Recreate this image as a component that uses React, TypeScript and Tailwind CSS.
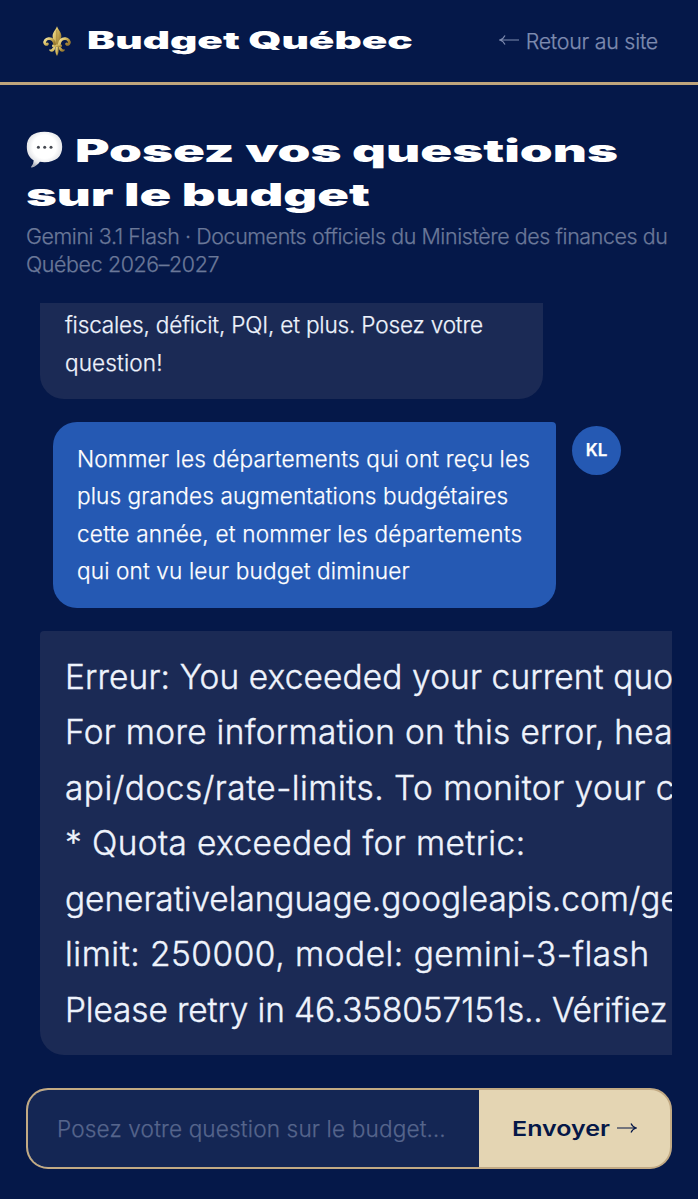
import { useState } from 'react'
import clsx from 'clsx'

interface Line {
  text: string
  className?: string
}

const WELCOME: Line[] = [
  { text: 'fiscales, déficit, PQI, et plus. Posez votre', className: 'tracking-[-0.19px]' },
  { text: 'question!', className: 'tracking-[0.1px]' },
]

const QUESTION: Line[] = [
  { text: 'Nommer les départements qui ont reçu les', className: 'tracking-[0.15px]' },
  { text: 'plus grandes augmentations budgétaires', className: 'tracking-[0.08px]' },
  { text: 'cette année, et nommer les départements', className: 'tracking-[0.2px]' },
  { text: 'qui ont vu leur budget diminuer', className: 'tracking-[0.13px]' },
]

const ERROR: Line[] = [
  { text: 'Erreur: You exceeded your current quo', className: 'tracking-[0.15px]' },
  { text: 'For more information on this error, hea', className: 'tracking-[0.33px]' },
  { text: 'api/docs/rate-limits. To monitor your c', className: 'tracking-[0.5px]' },
  { text: '* Quota exceeded for metric:', className: 'tracking-[0.4px]' },
  { text: 'generativelanguage.googleapis.com/ge', className: 'tracking-[-0.02px]' },
  { text: 'limit: 250000, model: gemini-3-flash', className: 'tracking-[0.53px]' },
  { text: 'Please retry in 46.358057151s.. Vérifiez', className: 'tracking-[-0.11px]' },
]

function Lines({ lines }: { lines: Line[] }) {
  return (
    <>
      {lines.map(l => (
        <div key={l.text} className={clsx('whitespace-nowrap', l.className)}>
          {l.text}
        </div>
      ))}
    </>
  )
}

function FleurDeLis() {
  return (
    <svg viewBox="0 0 30 32" className="h-8 w-[30px] shrink-0">
      <defs>
        <linearGradient id="gold" x1="0" y1="0" x2="1" y2="0.6">
          <stop offset="0" stopColor="#f3e6a4" />
          <stop offset="0.45" stopColor="#d9bf66" />
          <stop offset="1" stopColor="#9a7b30" />
        </linearGradient>
      </defs>
      <g fill="url(#gold)">
        <path d="M15 1.300c-1.200 3.500-4.400 6-4.400 9.900 0 3.100 2 5.300 2.800 9.100h3.200c.8-3.800 2.800-6 2.800-9.100 0-3.900-3.200-6.400-4.400-9.900z" />
        <path d="M9.800 26.700c-1.700 0-2.800-1.100-2.500-2.500 1.200.7 2.300.1 3-1 .5-.8 1.200-1.200 2.300-1.200.8 0 1 .3.900.8-.5 2.400-1.900 3.900-3.700 3.900zM20.200 26.700c1.700 0 2.800-1.100 2.500-2.500-1.200.7-2.300.1-3-1-.5-.8-1.200-1.200-2.300-1.200-.8 0-1 .3-.9.8.5 2.400 1.900 3.900 3.700 3.900z" />
        <path d="M13.600 22h2.800c.6 3.200.3 6.300-1.400 9-1.700-2.700-2-5.800-1.400-9z" />
        <rect x="10" y="19.600" width="10" height="2.500" rx="1.200" />
      </g>
      <g fill="none" stroke="url(#gold)" strokeWidth="2.800" strokeLinecap="round">
        <path d="M12.700 19.200c-.7-3.700-3-5.900-6.100-5.600-2.800.3-4.500 2.600-3.700 4.600.5 1.200 1.700 1.500 2.500.7" />
        <path d="M17.300 19.200c.7-3.700 3-5.900 6.100-5.600 2.800.3 4.500 2.600 3.700 4.600-.5 1.200-1.700 1.500-2.500.7" />
      </g>
      <path d="M14.800 5v14.500" stroke="#8e7230" strokeWidth="0.6" />
    </svg>
  )
}

function SpeechBubble() {
  return (
    <svg viewBox="0 0 37 37" className="-mt-1 h-[37px] w-[37px] shrink-0">
      <defs>
        <radialGradient id="bubble" cx="0.5" cy="0.42" r="0.6">
          <stop offset="0.55" stopColor="#ffffff" />
          <stop offset="0.82" stopColor="#e4e5e8" />
          <stop offset="1" stopColor="#a9adb8" />
        </radialGradient>
      </defs>
      <path
        d="M18.500.8C29.800.8 36.200 6 36.200 15.800s-6.200 15.400-17.700 15.400c-1.700 0-3.200-.1-4.600-.4-1.900 2.700-4.700 5-8 5.700-.8.1-1-.5-.6-1 1.500-1.800 2.300-3.600 2.300-6.200C3.200 26.800.8 22.300.8 15.800.8 6 7.200.8 18.500.8z"
        fill="url(#bubble)"
      />
      <circle cx="12.400" cy="16.200" r="1.500" fill="#454850" />
      <circle cx="18.700" cy="16.200" r="1.500" fill="#454850" />
      <circle cx="25" cy="16.200" r="1.500" fill="#454850" />
    </svg>
  )
}

function Arrow({ className }: { className?: string }) {
  return (
    <svg
      viewBox="0 0 20 12"
      className={clsx('h-3 w-5 shrink-0', className)}
      fill="none"
      stroke="currentColor"
      strokeWidth="1.2"
    >
      <path d="M0 6h19M14 1.500c1 2.200 2.700 3.800 5.200 4.500-2.500.7-4.200 2.300-5.200 4.500" />
    </svg>
  )
}

export default function App() {
  const [question, setQuestion] = useState('')

  return (
    <div className="flex h-[1199px] w-[698px] flex-col overflow-hidden bg-[#051849] font-['Inter','Liberation_Sans',sans-serif] font-light">
      {/* Header */}
      <header className="flex h-[85px] shrink-0 items-center justify-between border-b-[3px] border-[#bfa57c] pl-[42px] pr-10">
        <div className="flex items-center gap-[15px]">
          <FleurDeLis />
          <span className="block origin-left scale-x-[1.76] whitespace-nowrap text-[24px] font-black leading-8 text-white">
            Budget Québec
          </span>
        </div>
        <a
          href="#"
          className="flex items-center gap-[7px] whitespace-nowrap text-[21.400px] text-[#7e8bb0] [-webkit-text-stroke:0.25px]"
        >
          <Arrow className="-mt-0.5 rotate-180" />
          <span className="tracking-[-0.25px]">Retour au site</span>
        </a>
      </header>

      <main className="flex min-h-0 flex-1 flex-col px-[26px] pt-11">
        {/* Title */}
        <h1 className="text-[31px] font-black leading-[44px] text-white">
          <span className="flex items-center gap-3">
            <SpeechBubble />
            <span className="block origin-left scale-x-[1.7] whitespace-nowrap">Posez vos questions</span>
          </span>
          <span className="block origin-left scale-x-[1.69] whitespace-nowrap">sur le budget</span>
        </h1>
        <div className="mt-1.5 text-[21.400px] leading-[27.500px] text-[#6b7899] [-webkit-text-stroke:0.25px]">
          <div className="whitespace-nowrap tracking-[-0.39px]">
            Gemini 3.1 Flash · Documents officiels du Ministère des finances du
          </div>
          <div className="whitespace-nowrap tracking-[-0.37px]">Québec 2026–2027</div>
        </div>

        {/* Conversation */}
        <div className="mt-[25px] flex h-[752px] shrink-0 flex-col justify-end gap-[23px] overflow-hidden pl-3.5 text-[22.600px] leading-[37.500px] text-[#eef3fc] [-webkit-text-stroke:0.25px]">
          <div className="w-[503px] shrink-0 rounded-b-3xl bg-[#1b2a55] px-[25px] pb-[17.500px] pt-[3px]">
            <Lines lines={WELCOME} />
          </div>

          <div className="flex shrink-0 items-start gap-4 pl-[13px]">
            <div className="w-[503px] rounded-3xl rounded-tr bg-[#2559b3] px-6 py-[18px] text-white">
              <Lines lines={QUESTION} />
            </div>
            <div className="mt-1 flex size-[49px] items-center justify-center rounded-full bg-[#2559b3] text-[17px] font-semibold text-white">
              KL
            </div>
          </div>

          <div className="w-[900px] shrink-0 rounded-3xl rounded-tl bg-[#1b2a55] px-[25px] pb-[17px] pt-[19px] text-[33.400px] leading-[55.430px] [-webkit-text-stroke:0.4px]">
            <Lines lines={ERROR} />
          </div>
        </div>

        {/* Composer */}
        <form
          onSubmit={e => e.preventDefault()}
          className="mt-[33px] flex h-[81px] shrink-0 overflow-hidden rounded-[22px] border-2 border-[#c2aa84] bg-[#e4d5b3]"
        >
          <input
            value={question}
            onChange={e => setQuestion(e.target.value)}
            placeholder="Posez votre question sur le budget…"
            className="w-[451px] shrink-0 bg-[#142654] pl-[29px] text-[22.600px] tracking-[0.14px] text-white outline-none [-webkit-text-stroke:0.25px] placeholder:text-[#56658c]"
          />
          <button className="flex flex-1 items-center gap-[5px] pl-[33px] text-[#051747]">
            <span className="mt-0.5 block w-[100px] origin-left scale-x-[1.22] whitespace-nowrap text-left text-[20.500px] font-semibold">
              Envoyer
            </span>
            <Arrow className="-mt-0.5" />
          </button>
        </form>
      </main>
    </div>
  )
}
